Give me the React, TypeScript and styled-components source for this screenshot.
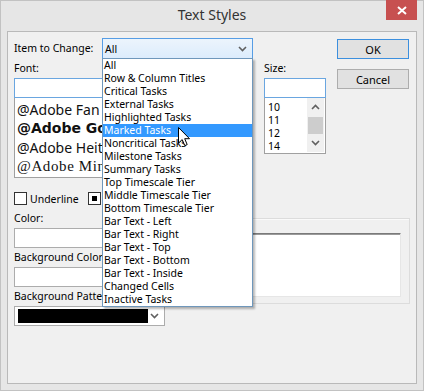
import styled, { createGlobalStyle } from "styled-components";

const GlobalStyle = createGlobalStyle`
  html, body {
    margin: 0;
    padding: 0;
    background: #fff;
  }
  body {
    font-family: "Noto Sans", "Segoe UI", sans-serif;
    font-size: 10.5px;
    color: #000;
  }
  * {
    box-sizing: border-box;
  }
`;

const items = [
  "All",
  "Row & Column Titles",
  "Critical Tasks",
  "External Tasks",
  "Highlighted Tasks",
  "Marked Tasks",
  "Noncritical Tasks",
  "Milestone Tasks",
  "Summary Tasks",
  "Top Timescale Tier",
  "Middle Timescale Tier",
  "Bottom Timescale Tier",
  "Bar Text - Left",
  "Bar Text - Right",
  "Bar Text - Top",
  "Bar Text - Bottom",
  "Bar Text - Inside",
  "Changed Cells",
  "Inactive Tasks",
];

// names are clipped by the open list, as in the dialog
const fonts = [
  { name: "@Adobe Fan Heiti Std B", kind: "light" },
  { name: "@Adobe Gothic Std B", kind: "bold" },
  { name: "@Adobe Heiti Std R", kind: "light" },
  { name: "@Adobe Ming Std L", kind: "serif" },
];

const sizes = ["10", "11", "12", "14"];

const Chevron = () => (
  <svg width="9" height="6" viewBox="0 0 9 6">
    <path d="M1 1 L4.5 4.5 L8 1" fill="none" stroke="#606060" strokeWidth="1.6" />
  </svg>
);

const Dialog = () => {
  return (
    <Window>
      <TitleBar>
        <Title>Text Styles</Title>
        <CloseButton>
          <svg width="10" height="9" viewBox="0 0 10 9">
            <path d="M1 1 L9 8 M9 1 L1 8" stroke="#fff" strokeWidth="2" />
          </svg>
        </CloseButton>
      </TitleBar>

      <Client>
        <Upper>
          <Main>
            <ItemRow>
              <FieldLabel $width={88}>Item to Change:</FieldLabel>
              <ComboWrap>
                <Combo $active>
                  <span>All</span>
                  <Chevron />
                </Combo>
                <DropList>
                  {items.map((it) => (
                    <DropItem key={it} $selected={it === "Marked Tasks"}>
                      {it}
                    </DropItem>
                  ))}
                  <Cursor width="13" height="20" viewBox="0 0 13 20">
                    <path
                      d="M0.5 0.5 L0.5 16 L4.2 12.6 L6.8 18.6 L9.2 17.6 L6.7 11.7 L11.5 11.7 Z"
                      fill="#fff"
                      stroke="#000"
                      strokeWidth="1"
                      strokeLinejoin="round"
                    />
                  </Cursor>
                </DropList>
              </ComboWrap>
            </ItemRow>

            <FontSizeRow>
              <Column $width={236}>
                <SmallLabel>Font:</SmallLabel>
                <TextBox />
                <FontList>
                  {fonts.map((f) => (
                    <FontItem key={f.name} $kind={f.kind}>
                      {f.name}
                    </FontItem>
                  ))}
                </FontList>
              </Column>
              <Column $width={62}>
                <SmallLabel>Size:</SmallLabel>
                <TextBox />
                <SizeList>
                  <SizeItems>
                    {sizes.map((s) => (
                      <SizeItem key={s}>{s}</SizeItem>
                    ))}
                  </SizeItems>
                  <ScrollBar>
                    <ScrollArrow>
                      <svg width="9" height="6" viewBox="0 0 9 6">
                        <path d="M1 5 L4.5 1.5 L8 5" fill="none" stroke="#606060" strokeWidth="1.6" />
                      </svg>
                    </ScrollArrow>
                    <Thumb />
                    <ScrollArrow>
                      <Chevron />
                    </ScrollArrow>
                  </ScrollBar>
                </SizeList>
              </Column>
            </FontSizeRow>

            <CheckRow>
              <CheckItem $width={74}>
                <CheckBox />
                <span>Underline</span>
              </CheckItem>
              <CheckItem>
                <CheckBox $mixed />
                <span>Strikethrough</span>
              </CheckItem>
            </CheckRow>
          </Main>

          <ButtonColumn>
            <Button $default>OK</Button>
            <Button>Cancel</Button>
          </ButtonColumn>
        </Upper>

        <Lower>
          <LeftColumn>
            <SmallLabel>Color:</SmallLabel>
            <Combo />
            <SmallLabel $gap>Background Color:</SmallLabel>
            <Combo />
            <SmallLabel $gap>Background Pattern:</SmallLabel>
            <Combo>
              <PatternSwatch />
              <Chevron />
            </Combo>
          </LeftColumn>
          <SampleGroup>
            <SampleBox />
          </SampleGroup>
        </Lower>
      </Client>
    </Window>
  );
};

const Window = styled.div`
  width: 424px;
  height: 391px;
  display: flex;
  flex-direction: column;
  background: #e6e6e6;
  box-shadow: inset 0 0 0 1px #c2c2c2;
`;

const TitleBar = styled.div`
  height: 31px;
  display: grid;
  grid-template-columns: 1fr auto 1fr;
  padding: 0 7px;
`;

const Title = styled.div`
  grid-column: 2;
  font-size: 14px;
  line-height: 30px;
  color: #333;
`;

const CloseButton = styled.div`
  grid-column: 3;
  justify-self: end;
  width: 31px;
  height: 20px;
  background: #c75050;
  display: flex;
  align-items: center;
  justify-content: center;
`;

const Client = styled.div`
  flex: 1;
  margin: 0 7px 7px;
  border: 1px solid #b9b9b9;
  background: #f0f0f0;
  padding: 6px 6px 0 6px;
`;

const Upper = styled.div`
  display: flex;
`;

const Main = styled.div`
  flex: 1;
  display: flex;
  flex-direction: column;
`;

const ItemRow = styled.div`
  display: flex;
  height: 21px;
`;

const FieldLabel = styled.div<{ $width: number }>`
  width: ${(p) => p.$width}px;
  line-height: 20px;
`;

const ComboWrap = styled.div`
  position: relative;
  width: 151px;
`;

const Combo = styled.div<{ $active?: boolean }>`
  height: ${(p) => (p.$active ? 21 : 20)}px;
  width: 151px;
  display: flex;
  align-items: center;
  justify-content: space-between;
  padding: 0 5px 0 2px;
  border: 1px solid ${(p) => (p.$active ? "#569de5" : "#acacac")};
  background: ${(p) => (p.$active ? "linear-gradient(#ecf4fc, #dcecfc)" : "#fff")};
`;

const DropList = styled.div`
  position: absolute;
  top: calc(100% - 1px);
  left: 0;
  width: 151px;
  border: 1px solid #6f97bb;
  background: #fff;
  box-shadow: 2px 2px 2px rgba(0, 0, 0, 0.28);
  z-index: 5;
`;

const DropItem = styled.div<{ $selected?: boolean }>`
  height: 13px;
  line-height: 13px;
  padding-left: 1px;
  white-space: nowrap;
  background: ${(p) => (p.$selected ? "#3399ff" : "transparent")};
  color: ${(p) => (p.$selected ? "#fff" : "#000")};
`;

const Cursor = styled.svg`
  position: absolute;
  left: 75px;
  top: 68px;
`;

const FontSizeRow = styled.div`
  display: flex;
  gap: 14px;
  margin-top: 2px;
`;

const Column = styled.div<{ $width: number }>`
  width: ${(p) => p.$width}px;
  display: flex;
  flex-direction: column;
`;

const SmallLabel = styled.div<{ $gap?: boolean }>`
  height: 15px;
  line-height: 15px;
  margin-bottom: 2px;
  margin-top: ${(p) => (p.$gap ? 2 : 0)}px;
  white-space: nowrap;
`;

const TextBox = styled.div`
  height: 20px;
  border: 1px solid #6aa6e0;
  background: #fff;
`;

const FontList = styled.div`
  height: 80px;
  border: 1px solid #a0a0a0;
  border-top: none;
  background: #fff;
  padding: 2px 0 0 2px;
  overflow: hidden;
`;

const FontItem = styled.div<{ $kind: string }>`
  height: 19px;
  line-height: 19px;
  white-space: nowrap;
  color: #111;
  font-size: ${(p) => (p.$kind === "serif" ? 15 : 14)}px;
  font-family: ${(p) =>
    p.$kind === "serif"
      ? '"Liberation Serif", serif'
      : p.$kind === "bold"
      ? '"DejaVu Sans", sans-serif'
      : '"Noto Sans", sans-serif'};
  font-weight: ${(p) => (p.$kind === "bold" ? 700 : 400)};
  letter-spacing: ${(p) => (p.$kind === "serif" ? "0.6px" : "0")};
`;

const SizeList = styled.div`
  height: 56px;
  border: 1px solid #a0a0a0;
  border-top: none;
  background: #fff;
  display: flex;
`;

const SizeItems = styled.div`
  flex: 1;
  padding: 3px 0 0 3px;
`;

const SizeItem = styled.div`
  height: 13px;
  line-height: 13px;
`;

const ScrollBar = styled.div`
  width: 17px;
  margin: 0 1px 1px 0;
  background: #f0f0f0;
  display: flex;
  flex-direction: column;
  align-items: center;
`;

const ScrollArrow = styled.div`
  height: 18px;
  display: flex;
  align-items: center;
  justify-content: center;
`;

const Thumb = styled.div`
  width: 15px;
  height: 17px;
  background: #cdcdcd;
  margin: 1px 0 0;
  flex: none;
`;

const CheckRow = styled.div`
  display: flex;
  margin-top: 14px;
  height: 13px;
`;

const CheckItem = styled.div<{ $width?: number }>`
  display: flex;
  align-items: center;
  gap: 3px;
  width: ${(p) => (p.$width ? `${p.$width}px` : "auto")};
  white-space: nowrap;
`;

const CheckBox = styled.div<{ $mixed?: boolean }>`
  width: 13px;
  height: 13px;
  border: 1px solid #333;
  background: #fff;
  display: flex;
  align-items: center;
  justify-content: center;

  &::after {
    content: "";
    display: ${(p) => (p.$mixed ? "block" : "none")};
    width: 5px;
    height: 5px;
    background: #000;
  }
`;

const ButtonColumn = styled.div`
  width: 72px;
  margin: 1px 1px 0 0;
  display: flex;
  flex-direction: column;
  gap: 10px;
`;

const Button = styled.div<{ $default?: boolean }>`
  height: 20px;
  display: flex;
  align-items: center;
  justify-content: center;
  font-size: 11px;
  background: #e1e1e1;
  border: 1px solid ${(p) => (p.$default ? "#3c8fde" : "#adadad")};
`;

const Lower = styled.div`
  display: flex;
  margin-top: 6px;
`;

const LeftColumn = styled.div`
  width: 151px;
  display: flex;
  flex-direction: column;
`;

const PatternSwatch = styled.div`
  width: 130px;
  height: 14px;
  background: #000;
  margin-left: 1px;
`;

const SampleGroup = styled.div`
  margin: 7px 0 0 auto;
  width: 229px;
  height: 86px;
  border: 1px solid #dcdcdc;
  box-shadow: inset 1px 1px 0 #fafafa;
  display: flex;
`;

const SampleBox = styled.div`
  flex: 1;
  margin: 14px 8px 6px 8px;
  background: #fff;
  border: 1px solid;
  border-color: #7a7a7a #e6e6e6 #e6e6e6 #7a7a7a;
  box-shadow: inset 1px 1px 0 #9a9a9a;
`;

export default function App() {
  return (
    <>
      <GlobalStyle />
      <Dialog />
    </>
  );
}
